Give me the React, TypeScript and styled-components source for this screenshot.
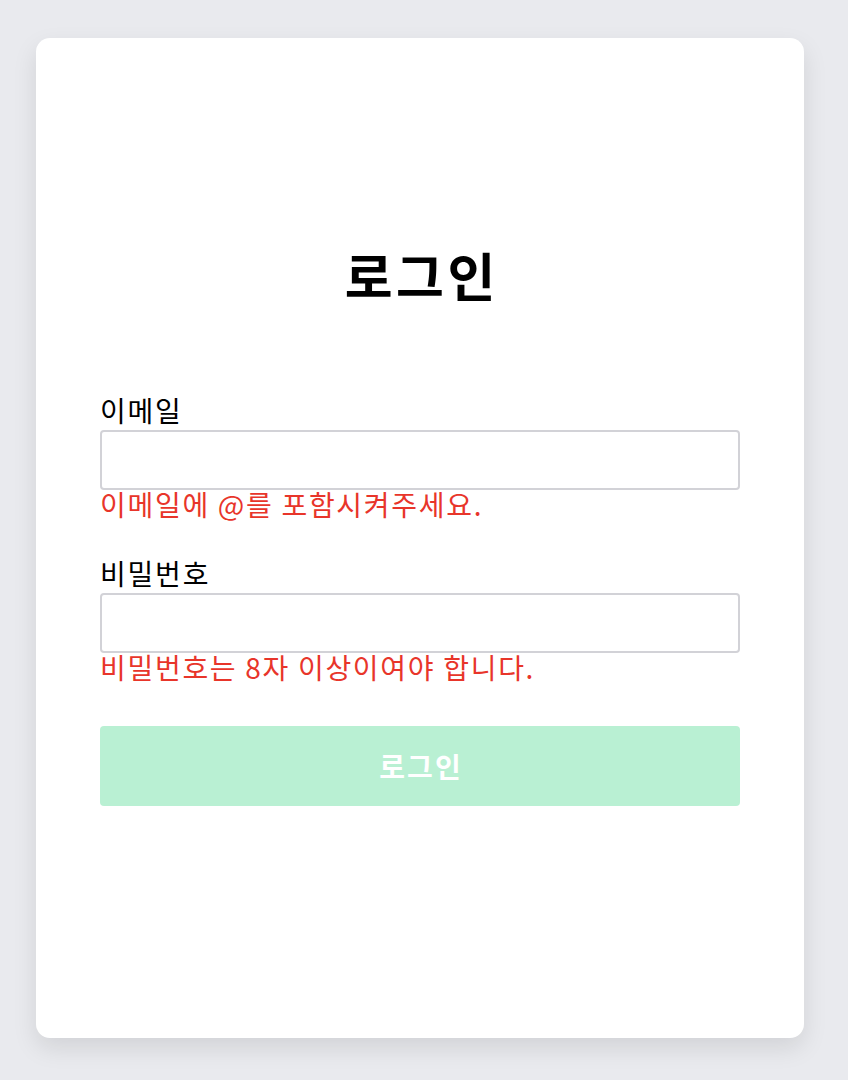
import React from 'react';
import styled, { createGlobalStyle } from 'styled-components';

const GlobalStyle = createGlobalStyle`
    body {
        margin: 0;
        background: #e9eaee;
        font-family: "Noto Sans CJK KR", "Noto Sans", sans-serif;
    }
`;

const Page = styled.main`
    padding: 38px 44px 42px 36px;
`;

const Card = styled.section`
    box-sizing: border-box;
    width: 768px;
    height: 1000px;
    padding: 207px 64px 0;
    background: #ffffff;
    border-radius: 14px;
    box-shadow: 0 10px 24px rgba(0, 0, 0, 0.1);
`;

const Title = styled.h1`
    margin: 0 0 88px;
    font-size: 52px;
    line-height: 60px;
    font-weight: 700;
    letter-spacing: 3.5px;
    text-indent: 3.5px;
    text-align: center;
    color: #000;
`;

const Form = styled.form`
    display: flex;
    flex-direction: column;
`;

const Field = styled.div<{ $last?: boolean }>`
    display: flex;
    flex-direction: column;
    margin-bottom: ${(p) => (p.$last ? '45px' : '38px')};
`;

const Label = styled.label`
    font-size: 28px;
    line-height: 34px;
    letter-spacing: 1.8px;
    color: #000;
    margin-bottom: 3px;
`;

const Input = styled.input`
    box-sizing: border-box;
    width: 100%;
    height: 60px;
    border: 2px solid #d2d2d7;
    border-radius: 4px;
    background: #fff;
    font-size: 24px;
    padding: 0 12px;
    outline: none;
`;

const ErrorText = styled.p`
    margin: 0;
    font-size: 28px;
    line-height: 28px;
    letter-spacing: 1.7px;
    color: #e8352a;
`;

const SubmitButton = styled.button`
    height: 80px;
    width: 100%;
    border: none;
    border-radius: 4px;
    background: #b9f0d3;
    color: #ffffff;
    font-family: inherit;
    font-size: 28px;
    font-weight: 700;
    letter-spacing: 2px;
    text-indent: 2px;
    cursor: not-allowed;
`;

export default function App() {
    return (
        <>
            <GlobalStyle />
            <Page>
                <Card>
                    <Title>로그인</Title>
                    <Form onSubmit={(e) => e.preventDefault()}>
                        <Field>
                            <Label htmlFor="email">이메일</Label>
                            <Input id="email" type="email" />
                            <ErrorText>이메일에 @를 포함시켜주세요.</ErrorText>
                        </Field>
                        <Field $last>
                            <Label htmlFor="password">비밀번호</Label>
                            <Input id="password" type="password" />
                            <ErrorText>비밀번호는 8자 이상이여야 합니다.</ErrorText>
                        </Field>
                        <SubmitButton type="submit" disabled>로그인</SubmitButton>
                    </Form>
                </Card>
            </Page>
        </>
    );
}
